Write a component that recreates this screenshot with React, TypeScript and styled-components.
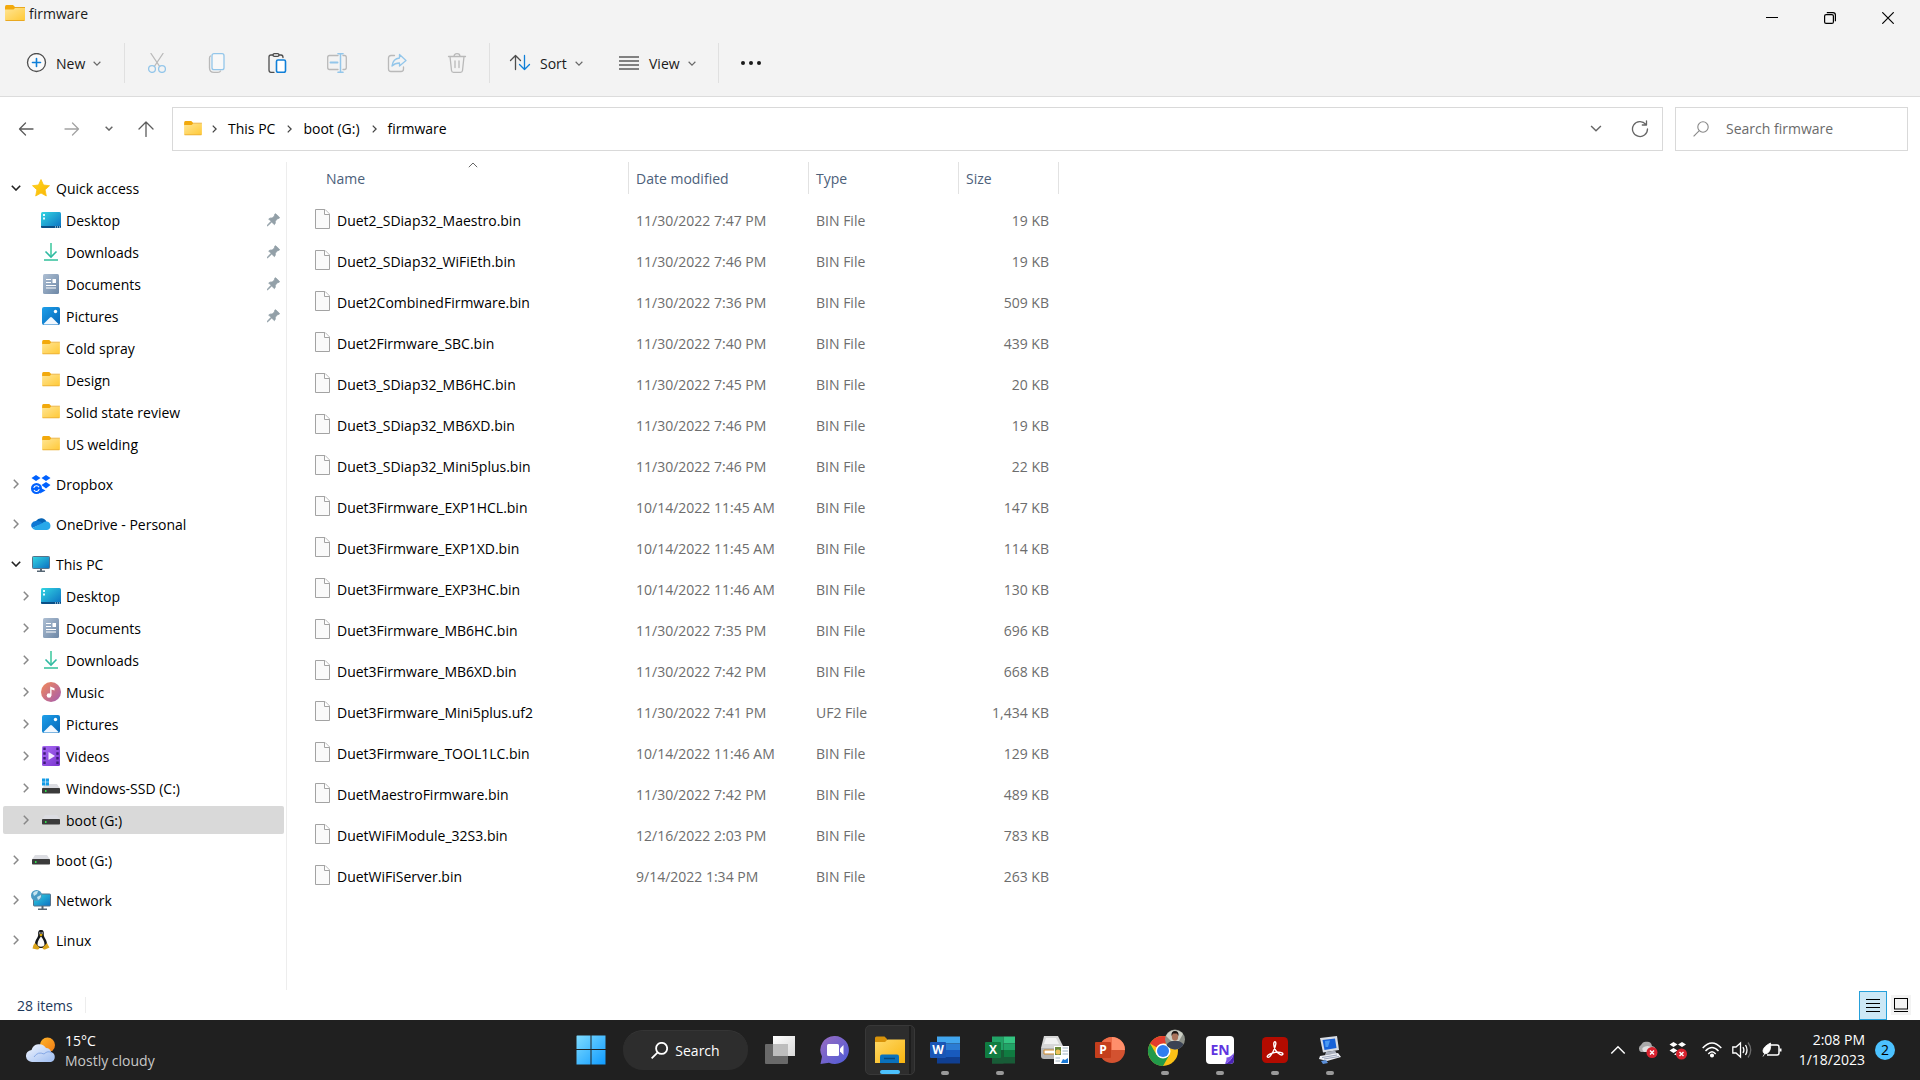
import React from "react";
import styled, { createGlobalStyle, css } from "styled-components";

const GlobalStyle = createGlobalStyle`
  *, *::before, *::after { box-sizing: border-box; }
  body { margin: 0; background: #fff; }
  body, button, input { font-family: "Open Sans", "Noto Sans", sans-serif; font-size: 14px; line-height: 20px; }
  button { border: 0; padding: 0; background: none; color: inherit; cursor: default; }
  a { color: inherit; text-decoration: none; cursor: default; }
  ul, ol { list-style: none; margin: 0; padding: 0; }
  svg { display: block; flex: none; }
`;

/* ---------- layout ---------- */

const Desktop = styled.div`
  display: flex;
  flex-direction: column;
  min-height: 100vh;
  color: #000;
`;

const Defs = styled.svg`
  position: absolute;
`;

const Chrome = styled.header`
  background: #f3f3f3;
  border-bottom: 1px solid #dcdcdc;
`;

const TitleBar = styled.div`
  display: flex;
  justify-content: space-between;
  height: 36px;
`;

const Title = styled.h1`
  display: flex;
  align-items: center;
  gap: 4px;
  height: 28px;
  margin: 0;
  padding-left: 5px;
  font-size: 14px;
  font-weight: 400;
  color: #1a1a1a;
`;

const WindowButtons = styled.div`
  display: flex;
  padding-right: 3px;
`;

const WindowButton = styled.button`
  display: grid;
  place-items: center;
  width: 58px;
`;

const Toolbar = styled.div`
  display: flex;
  align-items: center;
  height: 60px;
  padding: 0 8px 6px;
`;

const MenuButton = styled.button<{ $width: number }>`
  display: flex;
  align-items: center;
  gap: 8px;
  width: ${(p) => p.$width}px;
  height: 40px;
  padding-left: 16px;
  color: #1a1a1a;
`;

const ToolButton = styled.button`
  display: grid;
  place-items: center;
  width: 60px;
  height: 40px;
`;

const Divider = styled.span`
  width: 1px;
  height: 40px;
  margin: 0 2px;
  background: #e0e0e0;
`;

const Label = styled.span`
  padding-top: 2px;
`;

const AddressRow = styled.div`
  display: flex;
  align-items: center;
  height: 65px;
  padding: 0 12px 2px 3px;
`;

const NavButton = styled.button<{ $narrow?: boolean }>`
  display: grid;
  place-items: center;
  width: ${(p) => (p.$narrow ? 28 : 46)}px;
  height: 40px;
`;

const AddressBar = styled.nav`
  display: flex;
  flex: 1;
  align-items: center;
  height: 44px;
  margin: 0 12px 0 3px;
  padding-left: 11px;
  border: 1px solid #d9d9d9;
`;

const Crumbs = styled.ol`
  display: flex;
  flex: 1;
  gap: 2px;
`;

const Crumb = styled.li`
  display: flex;
  align-items: center;
  gap: 11px;
  padding-left: 10px;
`;

const AddressButton = styled.button`
  display: grid;
  place-items: center;
  width: 44px;
  height: 40px;
`;

const SearchBox = styled.label`
  display: flex;
  align-items: center;
  gap: 17px;
  width: 233px;
  height: 44px;
  padding-left: 17px;
  border: 1px solid #d9d9d9;
`;

const SearchInput = styled.input`
  flex: 1;
  min-width: 0;
  padding: 0;
  border: 0;
  outline: 0;
  background: none;
  &::placeholder { color: #6b6b6b; opacity: 1; }
`;

const Body = styled.div`
  display: grid;
  grid-template-columns: 287px 1fr;
  flex: 1;
`;

const Sidebar = styled.nav`
  padding: 10px 2px 0 3px;
  border-right: 1px solid #ededed;
`;

const Group = styled.ul`
  & + & { margin-top: 12px; }
`;

const TreeRow = styled.li<{ $child: boolean; $selected: boolean }>`
  display: flex;
  align-items: center;
  height: 28px;
  margin: 2px 0 4px;
  padding: 0 4px 0 ${(p) => (p.$child ? 10 : 0)}px;
  border-radius: 2px;
  ${(p) => p.$selected && css`background: #d9d9d9;`}
`;

const Toggle = styled.button`
  display: grid;
  place-items: center;
  width: 26px;
  height: 28px;
`;

const TreeLink = styled.a`
  display: flex;
  flex: 1;
  align-items: center;
  gap: 3px;
`;

const IconSlot = styled.span`
  display: grid;
  place-items: center;
  width: 24px;
`;

const Spacer = styled.span`
  width: 26px;
`;

const FileTable = styled.table`
  table-layout: fixed;
  width: 772px;
  border-collapse: collapse;
`;

const HeadCell = styled.th<{ $width: number }>`
  width: ${(p) => p.$width}px;
  height: 38px;
  padding: 0;
  vertical-align: top;
  font-weight: 400;
`;

const HeadButton = styled.button<{ $first?: boolean }>`
  position: relative;
  display: block;
  width: ${(p) => (p.$first ? "calc(100% - 30px)" : "100%")};
  height: 32px;
  margin-left: ${(p) => (p.$first ? 30 : 0)}px;
  padding-top: 2px;
  padding-left: ${(p) => (p.$first ? 9 : 7)}px;
  border-right: 1px solid #e2e2e2;
  text-align: left;
  color: #4c607a;
`;

const SortMark = styled.span`
  position: absolute;
  top: 0;
  left: calc(50% - 5px);
`;

const Cell = styled.td<{ $right?: boolean }>`
  height: 41px;
  padding: 0 ${(p) => (p.$right ? 10 : 0)}px 0 7px;
  color: #6d6d6d;
  text-align: ${(p) => (p.$right ? "right" : "left")};
`;

const NameCell = styled(Cell)`
  padding-left: 28px;
  color: #000;
`;

const FileName = styled.span`
  display: flex;
  align-items: center;
  gap: 7px;
`;

const StatusBar = styled.footer`
  display: flex;
  align-items: center;
  justify-content: space-between;
  height: 30px;
  padding: 0 9px 0 17px;
  color: #1e395b;
`;

const ItemCount = styled.span`
  padding-top: 2px;
  padding-right: 12px;
  line-height: 14px;
  border-right: 1px solid #ededed;
`;

const ViewModes = styled.div`
  display: flex;
  align-items: center;
  gap: 4px;
`;

const ViewMode = styled.button<{ $active?: boolean }>`
  display: grid;
  place-items: center;
  width: ${(p) => (p.$active ? 28 : 20)}px;
  height: ${(p) => (p.$active ? 29 : 20)}px;
  background: ${(p) => (p.$active ? "#cce8f6" : "#f3f3f3")};
  border: ${(p) => (p.$active ? "1px solid #26a0da" : "0")};
`;

const Taskbar = styled.footer`
  display: grid;
  grid-template-columns: 1fr auto 1fr;
  align-items: center;
  height: 60px;
  background: #202020;
  color: #fff;
`;

const Weather = styled.button`
  display: flex;
  align-items: center;
  gap: 9px;
  padding-left: 26px;
  text-align: left;
`;

const TwoLines = styled.span`
  display: flex;
  flex-direction: column;
  padding-top: 2px;
`;

const Muted = styled.span`
  color: #c8c8c8;
`;

const Apps = styled.div`
  display: flex;
  align-items: center;
  gap: 5px;
  padding-left: 1px;
`;

const AppButton = styled.button<{ $active?: boolean }>`
  position: relative;
  display: grid;
  place-items: center;
  width: 50px;
  height: 50px;
  border-radius: 5px;
  ${(p) =>
    p.$active &&
    css`
      background: linear-gradient(90deg, #2d2d2d 43px, #1d1d1d 43px, #1d1d1d 45px, #2b2b2b 45px);
      border: 1px solid #383838;
    `}
`;

const Running = styled.span<{ $active?: boolean }>`
  position: absolute;
  bottom: 0;
  left: 50%;
  width: ${(p) => (p.$active ? 20 : 8)}px;
  height: 4px;
  border-radius: 2px;
  transform: translateX(-50%);
  background: ${(p) => (p.$active ? "#4cc2ff" : "#9a9a9a")};
`;

const TaskSearch = styled.button`
  display: flex;
  align-items: center;
  justify-content: center;
  gap: 7px;
  width: 125px;
  height: 40px;
  margin: 0 2px;
  border-radius: 20px;
  background: #2d2d2d;
  border-top: 1px solid #353535;
`;

const Tray = styled.div`
  display: flex;
  align-items: center;
  justify-content: flex-end;
  padding-right: 25px;
`;

const TrayGroup = styled.div`
  display: flex;
  & + & { margin-left: 4px; }
`;

const TrayButton = styled.button`
  display: grid;
  place-items: center;
  width: 30px;
  height: 40px;
`;

const Clock = styled.button`
  display: flex;
  flex-direction: column;
  align-items: flex-end;
  width: 78px;
  margin-right: 10px;
`;

const Badge = styled.span`
  display: grid;
  place-items: center;
  width: 20px;
  height: 20px;
  border-radius: 50%;
  background: #4cc2ff;
  color: #000;
`;

/* ---------- icons ---------- */

const stops = (a: string, b: string) => (
  <>
    <stop offset="0" stopColor={a} />
    <stop offset="1" stopColor={b} />
  </>
);

const GRADIENTS: [string, string, string][] = [
  ["gFolder", "#ffe594", "#ffc937"],
  ["gStar", "#ffd91a", "#f9b208"],
  ["gScreen", "#33d6e2", "#0b6fc2"],
  ["gDoc", "#aebfd3", "#6d87a6"],
  ["gPic", "#1ea0ea", "#0566b8"],
  ["gMusic", "#f38a58", "#a45bb0"],
  ["gVideo", "#a96bf5", "#7a34cf"],
  ["gWin", "#7fdcff", "#0f9bff"],
  ["gChat", "#9a6cc0", "#4d5bd8"],
  ["gCloud", "#f2f6ff", "#9dbcf0"],
  ["gSun", "#ffb52b", "#f07a13"],
  ["gGlass", "#ffffff", "#d8d8d8"],
  ["gExpl", "#ffd967", "#f8b40f"],
];

const SharedGradients = () => (
  <Defs width="0" height="0" aria-hidden="true">
    <defs>
      {GRADIENTS.map(([id, a, b]) => (
        <linearGradient key={id} id={id} x1="0" y1="0" x2="1" y2="1">{stops(a, b)}</linearGradient>
      ))}
    </defs>
  </Defs>
);

type Dir = "down" | "right" | "up";
const Chevron = ({ dir = "down", size = 8, color = "#666", weight = 1.4 }: { dir?: Dir; size?: number; color?: string; weight?: number }) => {
  const box = dir === "right" ? "0 0 6 10" : "0 0 10 6";
  const d = dir === "right" ? "M.8 .8L5 5L.8 9.2" : dir === "down" ? "M.8 .8L5 5L9.2 .8" : "M.8 5.2L5 1L9.2 5.2";
  const w = dir === "right" ? Math.round(size * 0.6) : size;
  const h = dir === "right" ? size : Math.round(size * 0.6);
  return (
    <svg width={w} height={h} viewBox={box} fill="none" stroke={color} strokeWidth={weight}><path d={d} /></svg>
  );
};

const Folder = ({ width = 18 }: { width?: number }) => (
  <svg width={width} height={Math.round(width * 0.9)} viewBox="0 0 20 18">
    <path d="M0 2Q0 0 1.500 0H8L10 2V5H0Z" fill="#f2a90c" />
    <path d="M0 4.500H8.500L10 3H20V15.500H0Z" fill="url(#gFolder)" />
    <path d="M10 2.500H20M.5 15.500H19.500" stroke="#e9a820" fill="none" />
  </svg>
);

const Star = () => (
  <svg width="18" height="18" viewBox="0 0 18 18">
    <path d="M9 0.500L11.500 6L17.500 6.700L13.100 10.800L14.300 17L9 14L3.700 17L4.900 10.800L.5 6.700L6.500 6Z" fill="url(#gStar)" stroke="#fbc210" strokeWidth=".8" strokeLinejoin="round" />
  </svg>
);

const DesktopIcon = () => (
  <svg width="20" height="16" viewBox="0 0 20 16">
    <rect width="20" height="16" rx="1.500" fill="url(#gScreen)" />
    <path d="M0 14H20V14.500Q20 16 18.500 16H1.500Q0 16 0 14.500Z" fill="#0b4f86" />
    <path d="M2 2h2v2H2zM2 5.500h2v2H2zM14 14.500h1v1h-1zM16 14.500h1v1h-1zM18 14.500h1v1h-1z" fill="#e6fbff" />
  </svg>
);

const DownloadIcon = () => (
  <svg width="14" height="18" viewBox="0 0 14 18" fill="none" strokeWidth="1.600">
    <path d="M7 0V14" stroke="#45cba2" />
    <path d="M1.500 8.500L7 14L12.500 8.500" stroke="#2fb9a2" />
    <path d="M0 17H14" stroke="#3cc3a0" />
  </svg>
);

const DocumentIcon = () => (
  <svg width="16" height="20" viewBox="0 0 16 20">
    <rect width="16" height="20" rx="1.500" fill="url(#gDoc)" />
    <path d="M3 5.500h5M3 8.500h5M3 11.500h10M3 14h10" stroke="#fff" strokeWidth="1.200" />
    <path d="M9.500 5h3.500v4H9.500z" fill="#fff" />
  </svg>
);

const PictureIcon = () => (
  <svg width="18" height="18" viewBox="0 0 18 18">
    <rect width="18" height="18" rx="2" fill="url(#gPic)" />
    <path d="M1.500 17L8 10.500Q9 9.500 10 10.500L16.500 17Q16 17.500 15 17.500H3Q2 17.500 1.500 17Z" fill="#f1f8ff" />
    <circle cx="13.500" cy="4.500" r="1.700" fill="#fff" />
  </svg>
);

const MusicIcon = () => (
  <svg width="20" height="20" viewBox="0 0 20 20">
    <circle cx="10" cy="10" r="10" fill="url(#gMusic)" />
    <circle cx="8" cy="13.500" r="2.300" fill="#fff" />
    <path d="M9.200 13.500V4.500L13.500 6.200V8.500L10.500 7.400V13.500Z" fill="#fff" />
  </svg>
);

const VideoIcon = () => (
  <svg width="18" height="20" viewBox="0 0 18 20">
    <rect width="18" height="20" rx="1.500" fill="url(#gVideo)" />
    <path d="M2.500 1.500V20M15.500 1.500V20" stroke="#3d1a78" strokeWidth="2.400" strokeDasharray="2.500 2.200" />
    <path d="M6.500 6L13 10L6.500 14Z" fill="#f3eaff" />
  </svg>
);

const DriveIcon = ({ windows }: { windows?: boolean }) => (
  <svg width="18" height={windows ? 20 : 10} viewBox={windows ? "0 -6 18 20" : "0 0 18 10"}>
    <path d="M3 0H15L18 4.500H0Z" fill="#dcdde2" />
    <rect y="4" width="18" height="5.500" rx=".8" fill="#3b3b3b" />
    <rect x="3" y="6" width="1.500" height="2" fill="#2fe04a" />
    {windows && <path d="M0 -5.500h3.200v3.200H0zM3.800 -5.500H7v3.200H3.800zM0 -1.700h3.200V1.500H0zM3.800 -1.700H7V1.500H3.800z" fill="#149be6" />}
  </svg>
);

const DropboxIcon = () => (
  <svg width="20" height="19" viewBox="0 0 20 19">
    <path d="M5 0L9.500 3L5 6L.5 3ZM15 0L19.500 3L15 6L10.500 3ZM15 7L19.500 10L15 13.500L10.500 10Z" fill="#0061fe" />
    <circle cx="5.500" cy="13.500" r="5.500" fill="#0061fe" />
    <path d="M10 13L14.500 15.500L9 18.500Z" fill="#0061fe" />
    <path d="M2.800 13A2.800 2.800 0 0 1 8 12.200M8.200 14.200A2.800 2.800 0 0 1 3 15" fill="none" stroke="#fff" strokeWidth="1.100" />
  </svg>
);

const OneDriveIcon = () => (
  <svg width="20" height="14" viewBox="0 0 20 14">
    <path d="M5 4A6 6 0 0 1 15.500 4.500L10 9L3 6Z" fill="#0563b5" />
    <path d="M4.500 4A4.300 4.300 0 0 0 1.200 11L12 6.500Q8.500 3 4.500 4Z" fill="#0f78d4" />
    <path d="M15.500 4.500A4.300 4.300 0 0 1 16 13H4.500Q2.200 12.700 1.200 11L11 6.300Q13 4.200 15.500 4.500Z" fill="#28a8ea" />
  </svg>
);

const PcIcon = () => (
  <svg width="18" height="16" viewBox="0 0 18 16">
    <rect x=".5" y=".5" width="17" height="12" rx=".8" fill="url(#gScreen)" stroke="#57728a" />
    <path d="M8 13h2v2H8zM5 14.500h8V16H5z" fill="#566674" />
  </svg>
);

const NetworkIcon = () => (
  <svg width="20" height="20" viewBox="0 0 20 20">
    <rect x="2.500" y="4" width="17" height="12" rx=".8" fill="url(#gScreen)" stroke="#57728a" />
    <path d="M10.500 16h2v2.500h-2zM7 18.500h9V20H7z" fill="#566674" />
    <circle cx="5.500" cy="5.500" r="5.500" fill="#4b9bc4" />
    <path d="M2 3Q4 .5 7 1L6 4L3 6ZM6 7L10 5Q10.500 8 7 10Z" fill="#c5e4f0" />
  </svg>
);

const LinuxIcon = () => (
  <svg width="18" height="20" viewBox="0 0 18 20">
    <path d="M9 0C6.200 0 6 2 6.200 5C6 7.500 3 10 3 14L5 18H13L15 14C15 10 12 7.500 11.800 5C12 2 11.800 0 9 0Z" fill="#16181c" />
    <path d="M9 6.500C7.500 8.500 5.500 11 5.500 14.500C6 17.500 12 17.500 12.500 14.500C12.500 11 10.500 8.500 9 6.500Z" fill="#fafafa" />
    <path d="M7.200 4.800L9 3.800L10.800 4.800L9 6.500Z" fill="#f0b400" />
    <path d="M3 13L7.500 17.500Q7.500 20 5 19.500L.5 18.500L1.500 15ZM15 13L10.500 17.500Q10.500 20 13 19.500L17.500 17.500L16 15Z" fill="#d9a31a" />
    <circle cx="7.900" cy="3" r=".7" fill="#fff" /><circle cx="10.100" cy="3" r=".7" fill="#fff" />
  </svg>
);

const Pin = () => (
  <svg width="13" height="14" viewBox="0 0 14 14">
    <path d="M8.500 .5Q9 0 9.600 .5L13.300 4Q13.800 4.600 13.200 5L11 5.800L9 8.300Q9.400 10.500 8 12L5 9.200L1 13.200L.2 13.500L.5 12.500L4.300 8.400L1.800 5.900Q3.200 4.400 5.500 4.800L7.800 2.900Z" fill="#93a0a8" stroke="#93a0a8" strokeWidth=".8" />
  </svg>
);

const FileIcon = () => (
  <svg width="15" height="23" viewBox="0 0 15 23">
    <path d="M.5 .5H10L14.500 5V19.500H.5Z" fill="#fafafa" stroke="#a3a3a3" />
    <path d="M9.500 .5V5.500H14.500" fill="#fff" stroke="#a3a3a3" />
  </svg>
);

const Line = styled.svg.attrs({ fill: "none" })`
  stroke-width: 1.3px;
  stroke-linecap: round;
  stroke-linejoin: round;
`;

const DARK = "#4d4d4d";
const GREY = "#b9b9b9";
const BLUE = "#0f7fd8";
const PALE = "#93c6ea";

const NewIcon = () => (
  <Line width="24" height="20" viewBox="-2 0 24 20">
    <circle cx="10.500" cy="9.500" r="9" stroke={DARK} fill="#fafafa" />
    <path d="M10.500 5.500V13.500M6.500 9.500H14.500" stroke={BLUE} strokeWidth="1.600" />
  </Line>
);
const CutIcon = () => (
  <Line width="20" height="20" viewBox="0 0 20 20">
    <path d="M4 .5L12.700 13.500M16 .5L7.300 13.500" stroke={GREY} />
    <circle cx="5" cy="16" r="3.400" stroke={PALE} /><circle cx="15" cy="16" r="3.400" stroke={PALE} />
  </Line>
);
const CopyIcon = () => (
  <Line width="20" height="20" viewBox="0 0 20 20">
    <path d="M3.500 3Q2.500 3.500 2.500 5V15Q2.500 19.300 7 19.300H11Q13 19.300 13.500 18" stroke={GREY} />
    <rect x="5" y=".7" width="12" height="16" rx="2" stroke={PALE} fill="#f8f8f8" />
  </Line>
);
const PasteIcon = () => (
  <Line width="20" height="20" viewBox="0 0 20 20">
    <path d="M6 2H4Q2 2 2 4V17Q2 19.300 4 19.300H7M12 2H14Q16 2 16 4.500" stroke={DARK} />
    <rect x="6" y=".7" width="6" height="2.600" rx="1.300" stroke={DARK} />
    <rect x="9.500" y="7" width="9" height="12.300" rx="1.500" stroke={BLUE} strokeWidth="1.600" fill="#fff" />
  </Line>
);
const RenameIcon = () => (
  <Line width="20" height="20" viewBox="0 0 20 20">
    <path d="M11 2.500H2.500Q.7 2.500 .7 4.500V14.500Q.7 16.500 2.500 16.500H11M16 2.500H17.500Q19.300 2.500 19.300 4.500V14.500Q19.300 16.500 17.500 16.500H16" stroke={GREY} />
    <path d="M3.500 9.500H10.500" stroke={PALE} strokeWidth="2" />
    <path d="M13.500 .7V19.300M11 .7H16M11 19.300H16" stroke={PALE} strokeWidth="1.500" />
  </Line>
);
const ShareIcon = () => (
  <Line width="20" height="20" viewBox="0 0 20 20">
    <path d="M7.500 2.500H4Q1.500 2.500 1.500 5V16Q1.500 18.500 4 18.500H14Q16.500 18.500 16.500 16V14" stroke={GREY} />
    <path d="M12.500 1.500L19 7.500L12.500 13V10Q8 10 5 13Q6 5.500 12.500 5Z" stroke={PALE} />
  </Line>
);
const TrashIcon = () => (
  <Line width="20" height="20" viewBox="0 0 20 20" stroke={GREY}>
    <path d="M1.500 3.500H18.500M7 3.500Q7 .7 10 .7T13 3.500M3 3.500L4.500 17.500Q4.700 19.300 6.500 19.300H13.500Q15.300 19.300 15.500 17.500L17 3.500M8 8V14.500M12 8V14.500" />
  </Line>
);
const SortIcon = () => (
  <Line width="24" height="20" viewBox="-2 0 24 20">
    <path d="M5.500 16.500V2.500M.5 7.500L5.500 2.500L10.500 7.500" stroke={DARK} />
    <path d="M14.500 2.500V16.500M9.500 11.500L14.500 16.500L19.500 11.500" stroke={BLUE} />
  </Line>
);
const ViewIcon = () => (
  <svg width="24" height="20" viewBox="-2 0 24 20">
    <path d="M0 4H20M0 8H20M0 12H20M0 16H20" stroke="#5c5c5c" strokeWidth="1.300" />
  </svg>
);
const DotsIcon = () => (
  <svg width="20" height="4" viewBox="0 0 20 4" fill="#1a1a1a">
    <circle cx="2" cy="2" r="2" /><circle cx="10" cy="2" r="2" /><circle cx="18" cy="2" r="2" />
  </svg>
);

const Arrow = ({ dir, color }: { dir: "left" | "right" | "up"; color: string }) => (
  <Line width="16" height="16" viewBox="0 0 16 16" stroke={color}>
    <path d={dir === "left" ? "M15 8H1.500M7.500 2L1.500 8L7.500 14" : dir === "right" ? "M1 8H14.500M8.500 2L14.500 8L8.500 14" : "M8 15.500V1M1 8L8 1L15 8"} />
  </Line>
);

const Refresh = () => (
  <Line width="18" height="18" viewBox="0 0 18 18" stroke="#666">
    <path d="M16.500 9A7.500 7.500 0 1 1 14.800 4.300M15.500 .8V5H11.300" />
  </Line>
);

const Magnifier = ({ size = 16, color = "#888", weight = 1.1 }: { size?: number; color?: string; weight?: number }) => (
  <svg width={size} height={size} viewBox="0 0 16 16" fill="none" stroke={color} strokeWidth={weight}>
    <circle cx="10" cy="6" r="5.200" /><path d="M6.300 9.700L.6 15.400" />
  </svg>
);

const StartIcon = () => (
  <svg width="30" height="30" viewBox="0 0 30 30">
    <path d="M1 .5h13.500v13.500H.5V1zM15.500 .5H29.500V14H15.500zM.5 15H14.500V29.500H.5zM15.500 15H29.500V29.500H15.500z" fill="url(#gWin)" />
  </svg>
);
const TaskViewIcon = () => (
  <svg width="30" height="30" viewBox="0 0 30 30">
    <rect x="8" y="1" width="22" height="20" fill="url(#gGlass)" />
    <rect x="0" y="9" width="23" height="20" rx="1" fill="#777" fillOpacity=".85" />
    <rect x="8" y="9" width="15" height="12" fill="#bdbdbd" />
  </svg>
);
const ChatIcon = () => (
  <svg width="30" height="30" viewBox="0 0 30 30">
    <path d="M15 1A14 14 0 1 1 9 27.700L.5 29L2 21.500A14 14 0 0 1 15 1Z" fill="url(#gChat)" />
    <rect x="7" y="9" width="12" height="12" rx="1.500" fill="#fff" />
    <path d="M20 13.500L23.500 10V20L20 16.500Z" fill="#fff" />
  </svg>
);
const ExplorerIcon = () => (
  <svg width="30" height="28" viewBox="0 0 30 28">
    <path d="M0 2Q0 .5 1.500 .5H9.500L12 3V7H0Z" fill="#d8930a" />
    <path d="M0 6H10L12.500 3.500H30V27H0Z" fill="url(#gExpl)" />
    <path d="M5 27V20.500Q5 18.500 7 18.500H22Q24 18.500 24 20.500V27Z" fill="#0a72bd" />
    <path d="M9 22.500H20" stroke="#07497d" strokeWidth="1.500" />
  </svg>
);

const Letter = styled.text`
  font-family: "Open Sans", sans-serif;
  font-weight: 700;
  text-anchor: middle;
`;

const WordIcon = () => (
  <svg width="30" height="30" viewBox="0 0 30 30">
    <path d="M7 1.500H30V8.500H7z" fill="#41a5ee" /><path d="M7 8.500H30V15H7z" fill="#2b7cd3" />
    <path d="M7 15H30V22H7z" fill="#185abd" /><path d="M7 22H30V28.500H7z" fill="#103f91" />
    <rect y="7" width="16" height="16" rx="1" fill="#1a56b5" />
    <Letter x="8" y="19" fontSize="12" fill="#fff">W</Letter>
  </svg>
);
const ExcelIcon = () => (
  <svg width="30" height="30" viewBox="0 0 30 30">
    <path d="M7 1.500H18.500V15H7z" fill="#21a366" /><path d="M18.500 1.500H30V8.500H18.500z" fill="#33c481" />
    <path d="M18.500 8.500H30V15H18.500z" fill="#21a366" /><path d="M7 15H18.500V28.500H7z" fill="#185c37" />
    <path d="M18.500 15H30V22H18.500z" fill="#107c41" /><path d="M7 22H30V28.500H7z" fill="#185c37" />
    <rect y="7" width="16" height="16" rx="1" fill="#107c41" />
    <Letter x="8" y="19" fontSize="12" fill="#fff">X</Letter>
  </svg>
);
const PowerPointIcon = () => (
  <svg width="30" height="30" viewBox="0 0 30 30">
    <circle cx="17" cy="15" r="13" fill="#d35230" />
    <path d="M17 2A13 13 0 0 1 30 15H17Z" fill="#ff8f6b" /><path d="M17 2V15H4A13 13 0 0 1 17 2Z" fill="#ed6c47" />
    <rect y="7" width="16" height="16" rx="1" fill="#c43e1c" />
    <Letter x="8" y="19" fontSize="12" fill="#fff">P</Letter>
  </svg>
);
const ScannerIcon = () => (
  <svg width="30" height="30" viewBox="0 0 30 30">
    <path d="M4 1H18L24 13H1Z" fill="#d6d6d6" /><path d="M6 3H16L19 9H4Z" fill="#f1f1f1" />
    <path d="M1 13H24V21Q24 24 20 24H4Q1 24 1 21Z" fill="#b5b5b5" />
    <path d="M4 15H21V19H4Z" fill="#fff" stroke="#cf8a2a" />
    <rect x="14" y="11" width="15" height="18" fill="#fff" />
    <path d="M15 12h6v8h-6z" fill="#6d8a3a" /><circle cx="18" cy="17" r="2.500" fill="#eec25a" />
    <path d="M22.500 13H28M22.500 16H28M22.500 19H28M15.500 23H20M15.500 26H20" stroke="#9fb3c4" />
    <path d="M21 28L23 24L25 25L28 23V28Z" fill="#1a79d6" />
  </svg>
);
const ChromeIcon = () => (
  <svg width="40" height="42" viewBox="-1 0 40 42">
    <circle cx="17" cy="22" r="15" fill="#fbc116" />
    <path d="M17 22L4 14.500A15 15 0 0 1 30 14.500H17Z" fill="#e33b2e" />
    <path d="M4 14.500A15 15 0 0 0 17 37L23.500 25.700L10.500 25.700Z" fill="#229a4a" />
    <circle cx="17" cy="22" r="7.500" fill="#fff" /><circle cx="17" cy="22" r="6" fill="#2f7df0" />
    <circle cx="29" cy="10.500" r="10" fill="#8d9189" />
    <path d="M20 7A10 10 0 0 1 37 5L33 12H25Z" fill="#cdd0c6" />
    <path d="M20.500 16Q23 12 27 12H31Q35 12 37.500 15.500A10 10 0 0 1 20.500 16Z" fill="#3b4354" />
    <ellipse cx="29" cy="7.500" rx="3.200" ry="4.200" fill="#a9735a" /><path d="M25.500 7Q25 2 29 2T32.500 7L31 4.500H27Z" fill="#1b1512" />
  </svg>
);
const EndNoteIcon = () => (
  <svg width="28" height="28" viewBox="0 0 28 28">
    <rect width="28" height="28" rx="4" fill="#fff" />
    <path d="M28 17V24Q28 28 24 28H19Q26 25 28 17Z" fill="#4b24b4" />
    <path d="M28 17Q26 25 19 28Q21 24 20.500 21.500Q24 21.500 28 17Z" fill="#7f55ea" />
    <Letter x="14" y="18.500" fontSize="14" fill="#5f35e0">EN</Letter>
  </svg>
);
const AcrobatIcon = () => (
  <svg width="26" height="26" viewBox="0 0 26 26">
    <rect width="26" height="26" rx="4.500" fill="#b30b00" />
    <path d="M11.800 6.500C12 4 14.200 4.200 13.800 7C13.300 11 10 17.500 7.500 19.800C5.500 21.300 4.200 19.500 6.500 17.800C10 15.500 17 14.300 20 15.800C22 17 20.300 18.600 18.300 17.700C14.500 16 11.500 11 11.800 6.500Z" fill="none" stroke="#fff" strokeWidth="1.400" />
  </svg>
);
const PuttyIcon = () => (
  <svg width="30" height="30" viewBox="0 0 30 30">
    <path d="M5 3L22 1L24 15L8 17.500Z" fill="#d9dde4" /><path d="M7.500 5L20 3.500L21.500 13L9.500 15Z" fill="#1762d8" />
    <path d="M10 6L15 5.500L13 12L10.500 12Z" fill="#4a9af5" />
    <path d="M11 17L20 15.500L22 19L10 20Z" fill="#aab0bd" /><path d="M5 21L23 18L26 22L12 26L4 24Z" fill="#eef0f5" />
    <path d="M7 22.500L22 20M9 24L24 21.500" stroke="#9aa3b8" /><path d="M6 26L11 25L13 28L8 29Z" fill="#5b8fd8" />
  </svg>
);

const WeatherIcon = () => (
  <svg width="30" height="26" viewBox="0 0 30 26">
    <circle cx="21.500" cy="8" r="7.500" fill="url(#gSun)" />
    <path d="M6.500 25A6 6 0 0 1 5.500 13A8 8 0 0 1 20 11Q24 11 25 15A5.200 5.200 0 0 1 25 25Z" fill="url(#gCloud)" />
    <path d="M8 20Q12 14 18 17Q22 13 26 16" fill="none" stroke="#86a9e6" />
  </svg>
);

const ErrorDot = ({ cx, cy }: { cx: number; cy: number }) => (
  <>
    <circle cx={cx} cy={cy} r="5.500" fill="#d8232f" />
    <path d={`M${cx - 2} ${cy - 2}l4 4m0 -4l-4 4`} stroke="#fff" strokeWidth="1.400" />
  </>
);
const CloudErrorIcon = () => (
  <svg width="22" height="18" viewBox="0 0 22 18">
    <path d="M4 11A4 4 0 0 1 4 4Q6 0 10 .8Q14 .5 15 5Q20 6 18 11Z" fill="#a9a9a9" />
    <path d="M7 11Q3 7 8 5.500Q12 4 15 7L17 11Z" fill="#e0e0e0" />
    <ErrorDot cx={15} cy={11.5} />
  </svg>
);
const DropboxErrorIcon = () => (
  <svg width="20" height="20" viewBox="0 0 20 20">
    <path d="M5.500 2L9.500 4.500L5.500 7L1.500 4.500ZM14 2L18 4.500L14 7L10 4.500ZM5.500 8L9.500 10.500L5.500 13L1.500 10.500ZM6 14.500L9.500 12L11 16Z" fill="#fff" />
    <ErrorDot cx={13.5} cy={14} />
  </svg>
);
const WifiIcon = () => (
  <svg width="20" height="16" viewBox="0 0 20 16" fill="none" stroke="#fff" strokeWidth="1.500">
    <path d="M.7 6Q10 -4 19.300 6M3.500 9Q10 2 16.500 9M6.300 12Q10 7.500 13.700 12" /><circle cx="10" cy="13.500" r="1.300" fill="#fff" />
  </svg>
);
const VolumeIcon = () => (
  <svg width="20" height="18" viewBox="0 0 20 18" fill="none" stroke="#fff" strokeWidth="1.300">
    <path d="M.8 6H4L8.500 2V16L4 12H.8ZM11 6Q12.800 9 11 12M13.500 4Q16.500 9 13.500 14" /><path d="M16 1.500Q21.500 9 16 16.500" stroke="#6b6b6b" />
  </svg>
);
const BatteryIcon = () => (
  <svg width="20" height="16" viewBox="0 0 20 16" fill="none" stroke="#fff" strokeWidth="1.500">
    <path d="M8 3H15Q17 3 17 5V11Q17 13 15 13H5" /><path d="M18.500 6.500V9.500" strokeWidth="2" />
    <path d="M8.500 1Q9.500 9 5 11.500Q1 12.500 1 8.500Q1.500 4.500 8.500 1ZM1 14.500L5 8" fill="#fff" strokeWidth=".8" />
  </svg>
);

/* ---------- data ---------- */

type Node = { label: string; icon: React.ReactNode; child?: boolean; toggle?: "open" | "closed"; pinned?: boolean; selected?: boolean };

const TREE: Node[][] = [
  [
    { label: "Quick access", icon: <Star />, toggle: "open" },
    { label: "Desktop", icon: <DesktopIcon />, child: true, pinned: true },
    { label: "Downloads", icon: <DownloadIcon />, child: true, pinned: true },
    { label: "Documents", icon: <DocumentIcon />, child: true, pinned: true },
    { label: "Pictures", icon: <PictureIcon />, child: true, pinned: true },
    { label: "Cold spray", icon: <Folder />, child: true },
    { label: "Design", icon: <Folder />, child: true },
    { label: "Solid state review", icon: <Folder />, child: true },
    { label: "US welding", icon: <Folder />, child: true },
  ],
  [{ label: "Dropbox", icon: <DropboxIcon />, toggle: "closed" }],
  [{ label: "OneDrive - Personal", icon: <OneDriveIcon />, toggle: "closed" }],
  [
    { label: "This PC", icon: <PcIcon />, toggle: "open" },
    { label: "Desktop", icon: <DesktopIcon />, child: true, toggle: "closed" },
    { label: "Documents", icon: <DocumentIcon />, child: true, toggle: "closed" },
    { label: "Downloads", icon: <DownloadIcon />, child: true, toggle: "closed" },
    { label: "Music", icon: <MusicIcon />, child: true, toggle: "closed" },
    { label: "Pictures", icon: <PictureIcon />, child: true, toggle: "closed" },
    { label: "Videos", icon: <VideoIcon />, child: true, toggle: "closed" },
    { label: "Windows-SSD (C:)", icon: <DriveIcon windows />, child: true, toggle: "closed" },
    { label: "boot (G:)", icon: <DriveIcon />, child: true, toggle: "closed", selected: true },
  ],
  [{ label: "boot (G:)", icon: <DriveIcon />, toggle: "closed" }],
  [{ label: "Network", icon: <NetworkIcon />, toggle: "closed" }],
  [{ label: "Linux", icon: <LinuxIcon />, toggle: "closed" }],
];

const FILES: [string, string, string, string][] = [
  ["Duet2_SDiap32_Maestro.bin", "11/30/2022 7:47 PM", "BIN File", "19 KB"],
  ["Duet2_SDiap32_WiFiEth.bin", "11/30/2022 7:46 PM", "BIN File", "19 KB"],
  ["Duet2CombinedFirmware.bin", "11/30/2022 7:36 PM", "BIN File", "509 KB"],
  ["Duet2Firmware_SBC.bin", "11/30/2022 7:40 PM", "BIN File", "439 KB"],
  ["Duet3_SDiap32_MB6HC.bin", "11/30/2022 7:45 PM", "BIN File", "20 KB"],
  ["Duet3_SDiap32_MB6XD.bin", "11/30/2022 7:46 PM", "BIN File", "19 KB"],
  ["Duet3_SDiap32_Mini5plus.bin", "11/30/2022 7:46 PM", "BIN File", "22 KB"],
  ["Duet3Firmware_EXP1HCL.bin", "10/14/2022 11:45 AM", "BIN File", "147 KB"],
  ["Duet3Firmware_EXP1XD.bin", "10/14/2022 11:45 AM", "BIN File", "114 KB"],
  ["Duet3Firmware_EXP3HC.bin", "10/14/2022 11:46 AM", "BIN File", "130 KB"],
  ["Duet3Firmware_MB6HC.bin", "11/30/2022 7:35 PM", "BIN File", "696 KB"],
  ["Duet3Firmware_MB6XD.bin", "11/30/2022 7:42 PM", "BIN File", "668 KB"],
  ["Duet3Firmware_Mini5plus.uf2", "11/30/2022 7:41 PM", "UF2 File", "1,434 KB"],
  ["Duet3Firmware_TOOL1LC.bin", "10/14/2022 11:46 AM", "BIN File", "129 KB"],
  ["DuetMaestroFirmware.bin", "11/30/2022 7:42 PM", "BIN File", "489 KB"],
  ["DuetWiFiModule_32S3.bin", "12/16/2022 2:03 PM", "BIN File", "783 KB"],
  ["DuetWiFiServer.bin", "9/14/2022 1:34 PM", "BIN File", "263 KB"],
];

const COLUMNS: [string, number][] = [["Name", 342], ["Date modified", 180], ["Type", 150], ["Size", 100]];

const TOOLS: [string, React.ReactNode][] = [
  ["Cut", <CutIcon />], ["Copy", <CopyIcon />], ["Paste", <PasteIcon />],
  ["Rename", <RenameIcon />], ["Share", <ShareIcon />], ["Delete", <TrashIcon />],
];

const APPS: { name: string; icon: React.ReactNode; running?: boolean; active?: boolean }[] = [
  { name: "Task view", icon: <TaskViewIcon /> },
  { name: "Chat", icon: <ChatIcon /> },
  { name: "File Explorer", icon: <ExplorerIcon />, running: true, active: true },
  { name: "Word", icon: <WordIcon />, running: true },
  { name: "Excel", icon: <ExcelIcon />, running: true },
  { name: "Scanner", icon: <ScannerIcon /> },
  { name: "PowerPoint", icon: <PowerPointIcon /> },
  { name: "Chrome", icon: <ChromeIcon />, running: true },
  { name: "EndNote", icon: <EndNoteIcon />, running: true },
  { name: "Acrobat", icon: <AcrobatIcon />, running: true },
  { name: "PuTTY", icon: <PuttyIcon />, running: true },
];

const TRAY: [string, React.ReactNode][][] = [
  [
    ["Show hidden icons", <Chevron dir="up" size={16} color="#fff" weight={0.9} />],
    ["OneDrive", <CloudErrorIcon />],
    ["Dropbox", <DropboxErrorIcon />],
  ],
  [
    ["Network", <WifiIcon />],
    ["Volume", <VolumeIcon />],
    ["Battery", <BatteryIcon />],
  ],
];

/* ---------- app ---------- */

export default function App() {
  return (
    <Desktop>
      <GlobalStyle />
      <SharedGradients />
      <Chrome>
        <TitleBar>
          <Title><Folder width={20} />firmware</Title>
          <WindowButtons>
            <WindowButton aria-label="Minimize">
              <svg width="12" height="12" viewBox="0 0 12 12"><path d="M0 5.500H12" stroke="#000" /></svg>
            </WindowButton>
            <WindowButton aria-label="Restore">
              <svg width="12" height="12" viewBox="0 0 12 12" fill="none" stroke="#000" strokeWidth="1.200">
                <rect x=".6" y="2.600" width="8.800" height="8.800" rx="1.500" /><path d="M2.800 .6H9Q11.400 .6 11.400 3V9.200" />
              </svg>
            </WindowButton>
            <WindowButton aria-label="Close">
              <svg width="12" height="12" viewBox="0 0 12 12"><path d="M.3 .3L11.700 11.700M11.700 .3L.3 11.700" stroke="#000" strokeWidth="1.200" /></svg>
            </WindowButton>
          </WindowButtons>
        </TitleBar>
        <Toolbar>
          <MenuButton $width={114}><NewIcon /><Label>New</Label><Chevron /></MenuButton>
          <Divider />
          {TOOLS.map(([name, icon]) => <ToolButton key={name} aria-label={name}>{icon}</ToolButton>)}
          <Divider />
          <MenuButton $width={109}><SortIcon /><Label>Sort</Label><Chevron /></MenuButton>
          <MenuButton $width={115}><ViewIcon /><Label>View</Label><Chevron /></MenuButton>
          <Divider />
          <ToolButton aria-label="See more"><DotsIcon /></ToolButton>
        </Toolbar>
      </Chrome>

      <AddressRow>
        <NavButton aria-label="Back"><Arrow dir="left" color="#5c5c5c" /></NavButton>
        <NavButton aria-label="Forward"><Arrow dir="right" color="#a3a3a3" /></NavButton>
        <NavButton $narrow aria-label="Recent locations"><Chevron weight={1.8} /></NavButton>
        <NavButton aria-label="Up"><Arrow dir="up" color="#5c5c5c" /></NavButton>
        <AddressBar aria-label="Address">
          <Folder />
          <Crumbs>
            {["This PC", "boot (G:)", "firmware"].map((name) => (
              <Crumb key={name}><Chevron dir="right" size={8} color="#444" weight={1.6} /><a href="#">{name}</a></Crumb>
            ))}
          </Crumbs>
          <AddressButton aria-label="Previous locations"><Chevron size={12} weight={1.2} /></AddressButton>
          <AddressButton aria-label="Refresh"><Refresh /></AddressButton>
        </AddressBar>
        <SearchBox aria-label="Search firmware">
          <Magnifier />
          <SearchInput type="text" placeholder="Search firmware" />
        </SearchBox>
      </AddressRow>

      <Body>
        <Sidebar aria-label="Folders">
          {TREE.map((group, g) => (
            <Group key={g}>
              {group.map((node) => (
                <TreeRow key={node.label} $child={!!node.child} $selected={!!node.selected}>
                  {node.toggle ? (
                    <Toggle aria-label={node.label} aria-expanded={node.toggle === "open"}>
                      {node.toggle === "open" ? <Chevron size={10} color="#222" weight={1.6} /> : <Chevron dir="right" size={10} color="#888" weight={1.5} />}
                    </Toggle>
                  ) : <Spacer />}
                  <TreeLink href="#"><IconSlot>{node.icon}</IconSlot><Label>{node.label}</Label></TreeLink>
                  {node.pinned && <Pin />}
                </TreeRow>
              ))}
            </Group>
          ))}
        </Sidebar>
        <main>
          <FileTable>
            <thead>
              <tr>
                {COLUMNS.map(([name, width], i) => (
                  <HeadCell key={name} scope="col" $width={width}>
                    <HeadButton $first={i === 0}>
                      {name}
                      {i === 0 && <SortMark><Chevron dir="up" size={10} weight={1} /></SortMark>}
                    </HeadButton>
                  </HeadCell>
                ))}
              </tr>
            </thead>
            <tbody>
              {FILES.map(([name, date, type, size]) => (
                <tr key={name}>
                  <NameCell><FileName><FileIcon />{name}</FileName></NameCell>
                  <Cell>{date}</Cell>
                  <Cell>{type}</Cell>
                  <Cell $right>{size}</Cell>
                </tr>
              ))}
            </tbody>
          </FileTable>
        </main>
      </Body>

      <StatusBar>
        <ItemCount>28 items</ItemCount>
        <ViewModes>
          <ViewMode $active aria-label="Details view">
            <svg width="14" height="14" viewBox="0 0 14 14"><path d="M0 1.500H14M0 5.500H14M0 9.500H14M0 13.500H14" stroke="#000" /></svg>
          </ViewMode>
          <ViewMode aria-label="Large icons view">
            <svg width="14" height="14" viewBox="0 0 14 14" fill="none" stroke="#000"><rect x=".5" y=".5" width="13" height="10.500" /><path d="M0 13.500H14" /></svg>
          </ViewMode>
        </ViewModes>
      </StatusBar>

      <Taskbar>
        <Weather>
          <WeatherIcon />
          <TwoLines><span>15°C</span><Muted>Mostly cloudy</Muted></TwoLines>
        </Weather>
        <Apps>
          <AppButton aria-label="Start"><StartIcon /></AppButton>
          <TaskSearch><Magnifier size={17} color="#fff" weight={1.7} />Search</TaskSearch>
          {APPS.map((app) => (
            <AppButton key={app.name} aria-label={app.name} $active={app.active}>
              {app.icon}
              {app.running && <Running $active={app.active} />}
            </AppButton>
          ))}
        </Apps>
        <Tray>
          {TRAY.map((items, g) => (
            <TrayGroup key={g}>
              {items.map(([name, icon]) => <TrayButton key={name} aria-label={name}>{icon}</TrayButton>)}
            </TrayGroup>
          ))}
          <Clock><span>2:08 PM</span><span>1/18/2023</span></Clock>
          <Badge>2</Badge>
        </Tray>
      </Taskbar>
    </Desktop>
  );
}
